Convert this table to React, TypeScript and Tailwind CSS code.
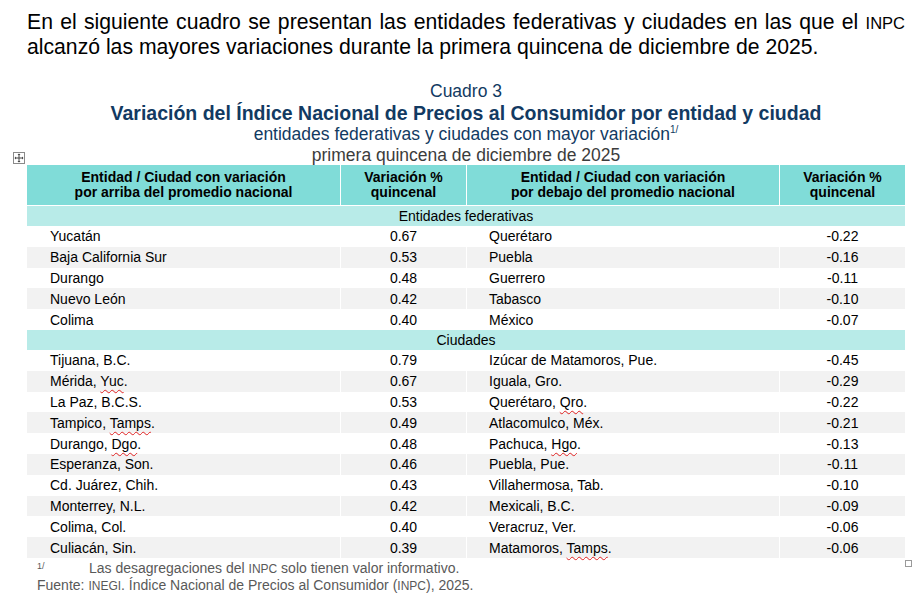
import React from "react";

type Row = [string, string, string, string];

const entidades: Row[] = [
  ["Yucatán", "0.67", "Querétaro", "-0.22"],
  ["Baja California Sur", "0.53", "Puebla", "-0.16"],
  ["Durango", "0.48", "Guerrero", "-0.11"],
  ["Nuevo León", "0.42", "Tabasco", "-0.10"],
  ["Colima", "0.40", "México", "-0.07"],
];

const ciudades: Row[] = [
  ["Tijuana, B.C.", "0.79", "Izúcar de Matamoros, Pue.", "-0.45"],
  ["Mérida, |Yuc|.", "0.67", "Iguala, Gro.", "-0.29"],
  ["La Paz, B.C.S.", "0.53", "Querétaro, |Qro|.", "-0.22"],
  ["Tampico, |Tamps|.", "0.49", "Atlacomulco, Méx.", "-0.21"],
  ["Durango, |Dgo|.", "0.48", "Pachuca, |Hgo|.", "-0.13"],
  ["Esperanza, Son.", "0.46", "Puebla, Pue.", "-0.11"],
  ["Cd. Juárez, Chih.", "0.43", "Villahermosa, Tab.", "-0.10"],
  ["Monterrey, N.L.", "0.42", "Mexicali, B.C.", "-0.09"],
  ["Colima, Col.", "0.40", "Veracruz, Ver.", "-0.06"],
  ["Culiacán, Sin.", "0.39", "Matamoros, |Tamps|.", "-0.06"],
];

function Name({ text }: { text: string }) {
  const parts = text.split("|");
  return (
    <span className="whitespace-pre">
      {parts.map((p, i) =>
        i % 2 === 1 ? (
          <span
            key={i}
            className="underline decoration-wavy decoration-[#e02020] decoration-1 underline-offset-[3px]"
          >
            {p}
          </span>
        ) : (
          p
        )
      )}
    </span>
  );
}

function DataRow({ row, gray }: { row: Row; gray: boolean }) {
  const bg = gray ? "bg-[#f2f2f2]" : "bg-white";
  return (
    <div className={`grid grid-cols-[313px_126px_313px_126px] h-[20.8px] text-[14px] leading-[16px] text-black ${bg}`}>
      <div className="flex items-center pl-[23px]">
        <Name text={row[0]} />
      </div>
      <div className="flex items-center justify-center border-l border-white">{row[1]}</div>
      <div className="flex items-center pl-[22px] border-l border-white">
        <Name text={row[2]} />
      </div>
      <div className="flex items-center justify-center border-l border-white">{row[3]}</div>
    </div>
  );
}

function SubHeader({ label }: { label: string }) {
  return (
    <div className="h-[20px] bg-[#b8ebe8] flex items-center justify-center text-[14px] leading-[16px] text-black">
      {label}
    </div>
  );
}

export default function App() {
  return (
    <div
      className="relative w-[912px] h-[598px] bg-white overflow-hidden"
      style={{ fontFamily: '"Liberation Sans", Arial, sans-serif' }}
    >
      <p className="pl-[27px] pr-[7px] pt-[10px] text-[21.2px] leading-[24px] text-justify text-black">
        En el siguiente cuadro se presentan las entidades federativas y ciudades en las que el{" "}
        <span className="text-[16.5px]">INPC</span> alcanzó las mayores variaciones durante la primera
        quincena de diciembre de 2025.
      </p>

      <div className="ml-[27px] w-[878px] mt-[22px] flex flex-col items-center">
        <div className="h-[21px] text-[17.5px] leading-[21px] text-[#123a62]">Cuadro 3</div>
        <div className="h-[22px] text-[19.5px] leading-[22px] font-bold text-[#123a62]">
          Variación del Índice Nacional de Precios al Consumidor por entidad y ciudad
        </div>
        <div className="h-[21px] text-[17.5px] leading-[21px] text-[#123a62]">
          entidades federativas y ciudades con mayor variación
          <span className="text-[10px] relative -top-[7px]">1/</span>
        </div>
        <div className="h-[20px] text-[17.5px] leading-[20px] text-[#3c3c3c]">
          primera quincena de diciembre de 2025
        </div>
      </div>

      <div className="relative ml-[27px] w-[878px]">
        <div className="absolute -left-[14px] -top-[13px] w-[12px] h-[12px] border border-[#8a8a8a] bg-white flex items-center justify-center">
          <svg width="10" height="10" viewBox="0 0 10 10" fill="none">
            <path d="M5 1v8M1 5h8" stroke="#444" strokeWidth="1" />
            <path d="M5 0.5L3.5 2h3z M5 9.5L3.5 8h3z M0.5 5L2 3.5v3z M9.5 5L8 3.5v3z" fill="#444" />
          </svg>
        </div>

        <div className="grid grid-cols-[313px_126px_313px_126px] h-[40px] bg-[#80dcd8] text-[14px] leading-[15px] font-bold text-black text-center">
          <div className="flex items-center justify-center">
            Entidad / Ciudad con variación
            <br />
            por arriba del promedio nacional
          </div>
          <div className="flex items-center justify-center border-l border-white">
            Variación %
            <br />
            quincenal
          </div>
          <div className="flex items-center justify-center border-l border-white">
            Entidad / Ciudad con variación
            <br />
            por debajo del promedio nacional
          </div>
          <div className="flex items-center justify-center border-l border-white">
            Variación %
            <br />
            quincenal
          </div>
        </div>
        <div className="h-px bg-white" />
        <SubHeader label="Entidades federativas" />
        {entidades.map((r, i) => (
          <DataRow key={"e" + i} row={r} gray={i % 2 === 1} />
        ))}
        <SubHeader label="Ciudades" />
        {ciudades.map((r, i) => (
          <DataRow key={"c" + i} row={r} gray={i % 2 === 1} />
        ))}

        <div className="pl-[10px] pt-[2px] text-[14px] leading-[16px] text-[#595959]">
          <div className="flex">
            <span className="w-[52px] text-[9px] leading-[12px]">1/</span>
            <span>
              Las desagregaciones del <span className="text-[12px]">INPC</span> solo tienen valor informativo.
            </span>
          </div>
          <div>
            Fuente: <span className="text-[12px]">INEGI</span>. Índice Nacional de Precios al Consumidor (
            <span className="text-[12px]">INPC</span>), 2025.
          </div>
        </div>
      </div>

      <div className="absolute left-[905px] top-[560px] w-[7px] h-[7px] border border-[#9a9a9a]" />
    </div>
  );
}
